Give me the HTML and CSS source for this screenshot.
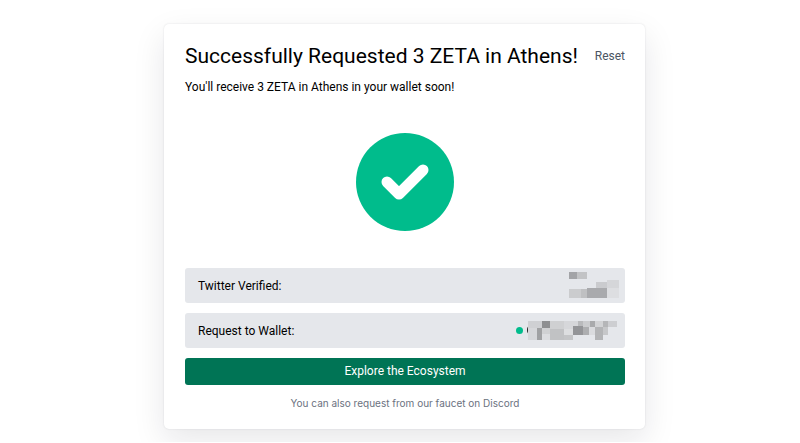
FILE: index.html
```html
<!DOCTYPE html>
<html lang="en">
<head>
    <meta charset="UTF-8">
    <meta name="viewport" content="width=device-width, initial-scale=1.0">
    <title>ZetaChain Faucet</title>
    <link rel="stylesheet" href="styles.css">
</head>
<body>

<main class="card">
    <div class="header">
        <h1>Successfully Requested 3 ZETA in Athens!</h1>
        <button class="reset" type="button">Reset</button>
    </div>
    <p class="message">You'll receive 3 ZETA in Athens in your wallet soon!</p>

    <svg class="success" viewBox="0 0 98 98" role="img" aria-label="Success">
        <circle cx="49" cy="49" r="49" fill="#00bc8c"/>
        <path d="M31 49L43 61L67 37" fill="none" stroke="#fff" stroke-width="11" stroke-linecap="round" stroke-linejoin="round"/>
    </svg>

    <div class="row">
        <span>Twitter Verified:</span>
        <svg class="handle" viewBox="0 0 50 27" shape-rendering="crispEdges" aria-hidden="true">
            <rect x="0" y="0" width="8" height="7" fill="#a3a4a7"/>
            <rect x="8" y="0" width="10" height="7" fill="#c2c3c5"/>
            <rect x="27" y="10" width="11" height="6" fill="#cacbce"/>
            <rect x="38" y="8" width="12" height="8" fill="#d5d6d9"/>
            <rect x="0" y="17" width="12" height="9" fill="#cbccce"/>
            <rect x="12" y="17" width="6" height="9" fill="#bfc0c2"/>
            <rect x="18" y="16" width="20" height="10" fill="#a9aaad"/>
            <rect x="38" y="16" width="12" height="10" fill="#dddee1"/>
        </svg>
    </div>

    <div class="row">
        <span>Request to Wallet:</span>
        <span class="wallet">
            <span class="dot"></span>
            <svg class="address" viewBox="0 0 92 21" aria-hidden="true">
                <ellipse cx="4" cy="10" rx="3" ry="4" fill="#222"/>
                <g shape-rendering="crispEdges">
                    <rect x="2" y="1" width="14" height="7" fill="#cfd0d3"/>
                    <rect x="16" y="1" width="8" height="7" fill="#8e8f91"/>
                    <rect x="24" y="1" width="14" height="8" fill="#cfd0d2"/>
                    <rect x="38" y="1" width="14" height="8" fill="#d6d7da"/>
                    <rect x="52" y="1" width="5" height="6" fill="#b9babc"/>
                    <rect x="57" y="1" width="7" height="6" fill="#cbccce"/>
                    <rect x="64" y="1" width="5" height="6" fill="#a9aaac"/>
                    <rect x="69" y="1" width="8" height="6" fill="#d2d3d5"/>
                    <rect x="77" y="1" width="5" height="6" fill="#b5b6b8"/>
                    <rect x="82" y="1" width="9" height="6" fill="#cdced1"/>
                    <rect x="2" y="8" width="9" height="12" fill="#d6d7da"/>
                    <rect x="11" y="8" width="5" height="12" fill="#a0a1a3"/>
                    <rect x="16" y="8" width="8" height="6" fill="#d0d1d3"/>
                    <rect x="16" y="14" width="8" height="6" fill="#dcdde0"/>
                    <rect x="24" y="9" width="14" height="11" fill="#c1c2c4"/>
                    <rect x="38" y="9" width="9" height="6" fill="#dddee0"/>
                    <rect x="38" y="15" width="9" height="5" fill="#c4c5c7"/>
                    <rect x="47" y="6" width="10" height="9" fill="#949598"/>
                    <rect x="57" y="7" width="6" height="8" fill="#adaeb0"/>
                    <rect x="63" y="7" width="6" height="8" fill="#dadbde"/>
                    <rect x="69" y="7" width="8" height="13" fill="#b3b4b6"/>
                    <rect x="77" y="7" width="5" height="8" fill="#c6c7c9"/>
                </g>
            </svg>
        </span>
    </div>

    <a class="explore" href="#">Explore the Ecosystem</a>
    <p class="note">You can also request from our faucet on Discord</p>
</main>

</body>
</html>
```

FILE: styles.css
```css
* {
    box-sizing: border-box;
}
body {
    margin: 0;
    padding: 24px 16px 13px 25px;
    font-family: Roboto, "Liberation Sans", sans-serif;
    font-size: 12px;
    line-height: 18px;
    color: #000;
    background: #fff;
}
h1, p {
    margin: 0;
}
.card {
    display: flex;
    flex-direction: column;
    max-width: 481px;
    margin: 0 auto;
    padding: 18px 20px 17px 21px;
    border-radius: 5px;
    background: #fff;
    box-shadow: 0 0 2px rgba(15, 23, 42, 0.12), 0 12px 32px rgba(15, 23, 42, 0.1);
}
.header {
    display: flex;
    align-items: center;
    justify-content: space-between;
}
h1 {
    font-size: 21px;
    font-weight: 400;
    line-height: 28px;
}
.reset {
    padding: 0;
    border: none;
    background: none;
    font: inherit;
    color: #4b5563;
    cursor: pointer;
}
.message {
    margin-top: 8px;
}
.success {
    width: 98px;
    height: 98px;
    margin: 37px auto;
}
.row {
    display: flex;
    align-items: center;
    justify-content: space-between;
    height: 35px;
    margin-bottom: 10px;
    padding: 0 6px 0 13px;
    border-radius: 3px;
    background: #e5e7eb;
}
.handle {
    width: 50px;
    height: 27px;
}
.wallet {
    display: flex;
    align-items: center;
    gap: 3px;
    padding-right: 1px;
}
.dot {
    width: 7px;
    height: 7px;
    border-radius: 50%;
    background: #00bc8c;
}
.address {
    width: 92px;
    height: 21px;
}
.explore {
    padding: 5px;
    border-radius: 3px;
    background: #007455;
    color: #fff;
    line-height: 17px;
    text-align: center;
    text-decoration: none;
}
.note {
    margin-top: 9px;
    font-family: Inter, "Liberation Sans", sans-serif;
    font-size: 10px;
    text-align: center;
    color: #6b7280;
}
```
